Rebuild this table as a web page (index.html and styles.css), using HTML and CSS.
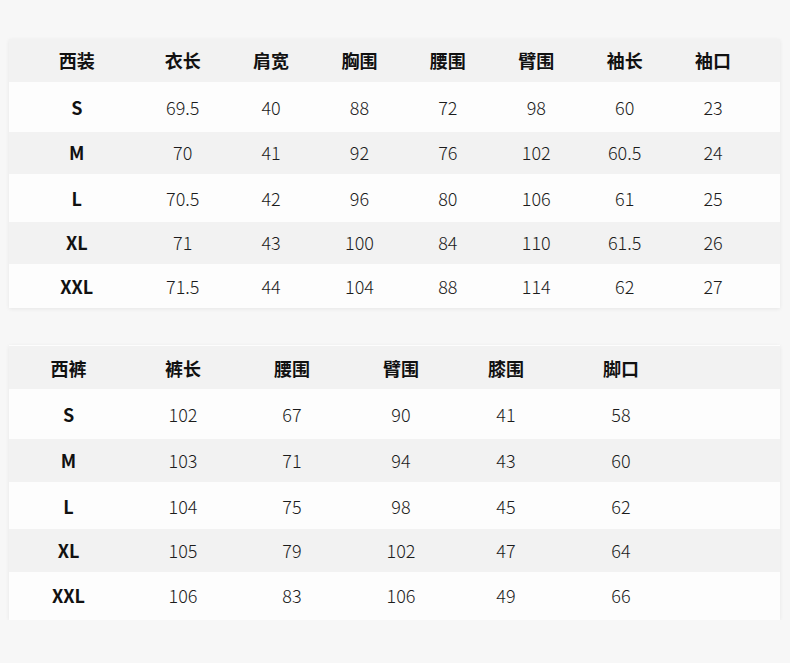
FILE: index.html
```html
<!DOCTYPE html>
<html lang="zh">
<head>
<meta charset="utf-8">
<title>尺码表</title>
<link rel="stylesheet" href="styles.css">
</head>
<body>
<div class="page">
  <div class="table t1">
    <div class="row head h43"><span>西装</span><span>衣长</span><span>肩宽</span><span>胸围</span><span>腰围</span><span>臂围</span><span>袖长</span><span>袖口</span></div>
    <div class="row light h50"><span class="size">S</span><span>69.5</span><span>40</span><span>88</span><span>72</span><span>98</span><span>60</span><span>23</span></div>
    <div class="row grey h42"><span class="size">M</span><span>70</span><span>41</span><span>92</span><span>76</span><span>102</span><span>60.5</span><span>24</span></div>
    <div class="row light h48"><span class="size">L</span><span>70.5</span><span>42</span><span>96</span><span>80</span><span>106</span><span>61</span><span>25</span></div>
    <div class="row grey h42"><span class="size">XL</span><span>71</span><span>43</span><span>100</span><span>84</span><span>110</span><span>61.5</span><span>26</span></div>
    <div class="row light h44"><span class="size">XXL</span><span>71.5</span><span>44</span><span>104</span><span>88</span><span>114</span><span>62</span><span>27</span></div>
  </div>
  <div class="table t2">
    <div class="row head h43"><span>西裤</span><span>裤长</span><span>腰围</span><span>臂围</span><span>膝围</span><span>脚口</span></div>
    <div class="row light h50"><span class="size">S</span><span>102</span><span>67</span><span>90</span><span>41</span><span>58</span></div>
    <div class="row grey h43"><span class="size">M</span><span>103</span><span>71</span><span>94</span><span>43</span><span>60</span></div>
    <div class="row light h47"><span class="size">L</span><span>104</span><span>75</span><span>98</span><span>45</span><span>62</span></div>
    <div class="row grey h43"><span class="size">XL</span><span>105</span><span>79</span><span>102</span><span>47</span><span>64</span></div>
    <div class="row light h48 lift"><span class="size">XXL</span><span>106</span><span>83</span><span>106</span><span>49</span><span>66</span></div>
  </div>
</div>
</body>
</html>
```

FILE: styles.css
```css
html, body {
  margin: 0;
  padding: 0;
  background: #f7f7f7;
}

.page {
  padding: 39px 10px 0 9px;
  display: flex;
  flex-direction: column;
  gap: 37px;
  font-family: "Noto Sans CJK SC", "Noto Sans", sans-serif;
}

.table {
  width: 771px;
  background: #fdfdfd;
  box-shadow: 0 1px 4px rgba(0, 0, 0, 0.07);
}

.t2 {
  border-top: 1px solid #fdfdfd;
}

.row {
  display: grid;
  align-items: center;
  justify-items: center;
  box-sizing: border-box;
}

.t1 .row {
  padding-left: 6px;
  grid-template-columns: 123.5px repeat(7, 88.4px);
}

.t2 .row {
  grid-template-columns: 119px 110px 108px 110px 100px 130px;
}

.h42 { height: 42px; }
.h43 { height: 43px; }
.h44 { height: 44px; }
.h47 { height: 47px; }
.h48 { height: 48px; }
.h50 { height: 50px; }

.head {
  background: #f2f2f2;
}

.t1 .head {
  padding-bottom: 2px;
}

.grey {
  background: #f2f2f2;
  padding-bottom: 2px;
}

.lift {
  padding-bottom: 3px;
}

.light {
  background: #fdfdfd;
}

.row span {
  font-size: 18px;
  line-height: 1;
  color: #1c1c1c;
  font-weight: 200;
  white-space: nowrap;
}

.head span {
  color: #111;
  font-weight: 700;
}

.row span.size {
  color: #111;
  font-weight: 700;
}
```
